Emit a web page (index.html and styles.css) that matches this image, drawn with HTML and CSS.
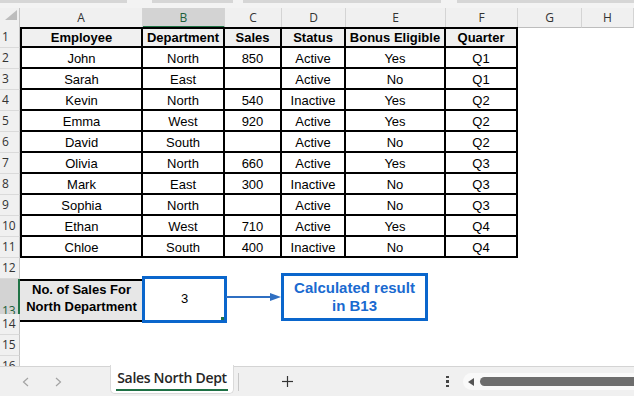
FILE: index.html
```html
<!DOCTYPE html>
<html>
<head>
<meta charset="utf-8">
<link rel="stylesheet" href="styles.css">
</head>
<body>
<div class="app">
  <div class="topstrip">
    <span class="seg s1"></span><span class="seg s2"></span><span class="seg s3"></span><span class="seg s4"></span>
  </div>
  <div class="sheet">
    <div class="row hdr">
      <div class="corner"><svg width="19" height="18" viewBox="0 0 19 18"><polygon points="5,11 17,11 17,1" fill="#bdbdbd"/></svg></div>
      <div class="ch">A</div><div class="ch sel">B</div><div class="ch">C</div><div class="ch">D</div><div class="ch">E</div><div class="ch">F</div><div class="ch">G</div><div class="ch">H</div><div class="ch last"></div>
    </div>
    <div class="row">
      <div class="rh">1</div>
      <div class="t th first">Employee</div><div class="t th">Department</div><div class="t th">Sales</div><div class="t th">Status</div><div class="t th">Bonus Eligible</div><div class="t th">Quarter</div>
    </div>
    <div class="row">
      <div class="rh">2</div>
      <div class="t first">John</div><div class="t">North</div><div class="t">850</div><div class="t">Active</div><div class="t">Yes</div><div class="t">Q1</div>
    </div>
    <div class="row">
      <div class="rh">3</div>
      <div class="t first">Sarah</div><div class="t">East</div><div class="t"></div><div class="t">Active</div><div class="t">No</div><div class="t">Q1</div>
    </div>
    <div class="row">
      <div class="rh">4</div>
      <div class="t first">Kevin</div><div class="t">North</div><div class="t">540</div><div class="t">Inactive</div><div class="t">Yes</div><div class="t">Q2</div>
    </div>
    <div class="row">
      <div class="rh">5</div>
      <div class="t first">Emma</div><div class="t">West</div><div class="t">920</div><div class="t">Active</div><div class="t">Yes</div><div class="t">Q2</div>
    </div>
    <div class="row">
      <div class="rh">6</div>
      <div class="t first">David</div><div class="t">South</div><div class="t"></div><div class="t">Active</div><div class="t">No</div><div class="t">Q2</div>
    </div>
    <div class="row">
      <div class="rh">7</div>
      <div class="t first">Olivia</div><div class="t">North</div><div class="t">660</div><div class="t">Active</div><div class="t">Yes</div><div class="t">Q3</div>
    </div>
    <div class="row">
      <div class="rh">8</div>
      <div class="t first">Mark</div><div class="t">East</div><div class="t">300</div><div class="t">Inactive</div><div class="t">No</div><div class="t">Q3</div>
    </div>
    <div class="row">
      <div class="rh">9</div>
      <div class="t first">Sophia</div><div class="t">North</div><div class="t"></div><div class="t">Active</div><div class="t">No</div><div class="t">Q3</div>
    </div>
    <div class="row">
      <div class="rh">10</div>
      <div class="t first">Ethan</div><div class="t">West</div><div class="t">710</div><div class="t">Active</div><div class="t">Yes</div><div class="t">Q4</div>
    </div>
    <div class="row">
      <div class="rh">11</div>
      <div class="t first">Chloe</div><div class="t">South</div><div class="t">400</div><div class="t">Inactive</div><div class="t">No</div><div class="t">Q4</div>
    </div>
    <div class="row">
      <div class="rh">12</div>
    </div>
    <div class="row r13">
      <div class="rh sel">13</div>
      <div class="lbl">No. of Sales For<br>North Department</div>
      <div class="val">3<span class="handle"></span></div>
    </div>
    <div class="row"><div class="rh">14</div></div>
    <div class="row"><div class="rh">15</div></div>
    <div class="row"><div class="rh">16</div></div>

    <svg class="arrow" width="56" height="12" viewBox="0 0 56 12">
      <line x1="0" y1="6" x2="46" y2="6" stroke="#2f6fc2" stroke-width="2"/>
      <polygon points="44,2 55,6 44,10" fill="#2f6fc2"/>
    </svg>
    <div class="callout">Calculated result<br>in B13</div>
  </div>
  <div class="tabbar">
    <div class="nav">
      <svg width="7" height="10" viewBox="0 0 7 10"><polyline points="6,1 1.5,5 6,9" fill="none" stroke="#a3a3a3" stroke-width="1.2"/></svg>
      <svg width="7" height="10" viewBox="0 0 7 10"><polyline points="1,1 5.5,5 1,9" fill="none" stroke="#a3a3a3" stroke-width="1.2"/></svg>
    </div>
    <div class="tab"><span class="tabname">Sales North Dept</span></div>
    <div class="tsep"></div>
    <svg class="plus" width="11" height="11" viewBox="0 0 11 11"><line x1="5.5" y1="0" x2="5.5" y2="11" stroke="#333" stroke-width="1.2"/><line x1="0" y1="5.5" x2="11" y2="5.5" stroke="#333" stroke-width="1.2"/></svg>
    <div class="dots"><i></i><i></i><i></i></div>
    <div class="hscroll">
      <svg class="larr" width="7" height="8" viewBox="0 0 7 8"><polygon points="6,0 6,8 0,4" fill="#555"/></svg>
      <div class="thumb"></div>
    </div>
  </div>
</div>
</body>
</html>
```
FILE: styles.css
```css
* { box-sizing: border-box; }
html, body { margin: 0; padding: 0; }
body {
  width: 634px;
  height: 396px;
  overflow: hidden;
  background: #fff;
  font-family: "Liberation Sans", Arial, sans-serif;
}
.app {
  display: flex;
  flex-direction: column;
  height: 396px;
}
.topstrip {
  height: 8px;
  flex: none;
  background: #f3f3f3;
  position: relative;
  display: flex;
  align-items: flex-start;
}
.seg { height: 3px; background: #d6d6d6; display: block; }
.s1 { width: 127px; }
.s2 { width: 81px; margin-left: 25px; }
.s3 { width: 198px; margin-left: 10px; }
.s4 { flex: 1; margin-left: 16px; }

.sheet {
  flex: 1;
  overflow: hidden;
  position: relative;
  background: #fff;
}
.row {
  display: grid;
  grid-template-columns: 20px 123px 82px 57px 64px 100px 72px 64px 52px;
  height: 21px;
}
.row.hdr { height: 19px; }
.row.r13 { height: 35px; }

.corner {
  background: #f0f0f0;
  border-right: 1px solid #c6c6c6;
  border-bottom: 1px solid #bdbdbd;
}
.corner svg { display: block; margin-top: 1px; }
.ch {
  background: #f0f0f0;
  border-right: 1px solid #d4d4d4;
  border-bottom: 1px solid #bdbdbd;
  font: 12px "Open Sans", "Noto Sans", sans-serif;
  color: #333;
  display: flex;
  align-items: center;
  justify-content: center;
}
.ch.sel {
  background: #d3d3d3;
  border-bottom: 2px solid #217346;
  color: #1d5f3a;
}
.ch.last { border-right: none; }

.rh {
  background: #f0f0f0;
  border-right: 1px solid #c6c6c6;
  border-bottom: 1px solid #dadada;
  font: 12px "Open Sans", "Noto Sans", sans-serif;
  color: #333;
  display: flex;
  align-items: flex-end;
  padding: 0 0 3px 2px;
  line-height: 14px;
  overflow: hidden;
}
.rh.sel {
  background: #d3d3d3;
  border-right: 2px solid #217346;
  color: #1d5f3a;
}

.t {
  border-right: 2px solid #000;
  border-bottom: 2px solid #000;
  font-size: 13px;
  color: #000;
  display: flex;
  align-items: center;
  justify-content: center;
  padding-top: 1px;
  white-space: nowrap;
}
.t.first { border-left: 2px solid #000; }
.t.th {
  border-top: 2px solid #000;
  background: #f0f0f0;
  font-weight: bold;
  padding-top: 0;
}

.lbl {
  background: #e7e7e7;
  border-top: 2px solid #000;
  border-bottom: 2px solid #000;
  font-weight: bold;
  font-size: 13px;
  line-height: 17px;
  text-align: center;
  display: flex;
  align-items: center;
  justify-content: center;
  padding-bottom: 5px;
}
.val {
  position: relative;
  z-index: 1;
  margin: -3px -2px -1px -1px;
  border: 3px solid #0a66cc;
  background: #fff;
  font-size: 13px;
  display: flex;
  align-items: center;
  justify-content: center;
  padding-bottom: 2px;
}
.handle {
  position: absolute;
  right: 0;
  bottom: 0;
  width: 3px;
  height: 3px;
  background: #217346;
}

.arrow {
  position: absolute;
  left: 226px;
  top: 283px;
  z-index: 2;
}
.callout {
  position: absolute;
  left: 281px;
  top: 265px;
  width: 147px;
  height: 48px;
  border: 3px solid #0a66cc;
  background: #fff;
  color: #1a6ad0;
  font-weight: bold;
  font-size: 15px;
  line-height: 18px;
  text-align: center;
  display: flex;
  align-items: center;
  justify-content: center;
  padding-bottom: 1px;
}

.tabbar {
  height: 30px;
  flex: none;
  background: #f0f0f0;
  border-top: 1px solid #d4d4d4;
  display: flex;
  align-items: center;
  position: relative;
}
.nav {
  width: 110px;
  display: flex;
  align-items: center;
  gap: 26px;
  padding-left: 22px;
  flex: none;
}
.nav svg { display: block; }
.tab {
  width: 124px;
  height: 29px;
  margin-top: -2px;
  align-self: flex-start;
  background: #fff;
  border: 1px solid #dadada;
  border-top: none;
  border-radius: 0 0 5px 5px;
  flex: none;
  display: flex;
  justify-content: center;
  padding-top: 3px;
}
.tabname {
  font: 600 14px "Open Sans", "Noto Sans", sans-serif;
  color: #262626;
  letter-spacing: -0.3px;
  line-height: 19px;
  height: 23px;
  border-bottom: 2px solid #1e7145;
  padding: 0 1px;
  white-space: nowrap;
}
.tsep {
  width: 1px;
  height: 18px;
  background: #c8c8c8;
  margin-left: 4px;
  flex: none;
}
.plus { margin-left: 43px; flex: none; display: block; }
.dots {
  margin-left: 153px;
  width: 3px;
  display: flex;
  flex-direction: column;
  gap: 2px;
  flex: none;
}
.dots i { display: block; width: 3px; height: 2.5px; background: #444; }
.hscroll {
  margin-left: 14px;
  flex: 1;
  height: 17px;
  background: #f9f9f9;
  border-radius: 9px 0 0 9px;
  display: flex;
  align-items: center;
  padding-left: 5px;
}
.larr { display: block; flex: none; }
.thumb {
  margin-left: 5px;
  flex: 1;
  height: 9px;
  background: #6d6d6d;
  border-radius: 5px 0 0 5px;
}
```
